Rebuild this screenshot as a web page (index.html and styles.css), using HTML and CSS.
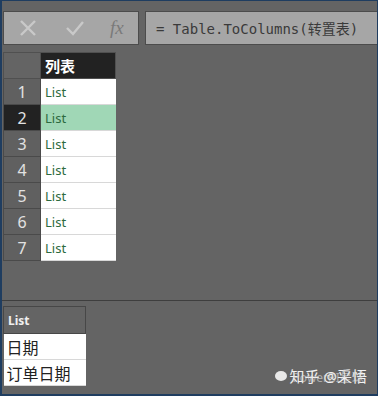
FILE: index.html
```html
<!DOCTYPE html>
<html>
<head>
    <meta charset="utf-8" />
    <title>ToColumns</title>
    <link rel="stylesheet" href="styles.css">
</head>
<body>
    <div class="pq-main">
        <div class="pq-formula">
            <div class="pq-formula-buttons">
                <svg class="pq-icon" width="20" height="20" viewBox="0 0 20 20">
                    <path d="M3 3 L17 17 M17 3 L3 17" stroke="#c9c9c9" stroke-width="2.4" fill="none" />
                </svg>
                <svg class="pq-icon" width="22" height="20" viewBox="0 0 22 20">
                    <path d="M3 10 L9 16 L19 4" stroke="#c9c9c9" stroke-width="2.4" fill="none" />
                </svg>
                <span class="pq-fx">fx</span>
            </div>
            <div class="pq-formula-text">= Table.ToColumns(转置表)</div>
        </div>

        <table class="pq-grid">
            <tr>
                <th class="pq-corner"></th>
                <th class="pq-col-head">列表</th>
            </tr>
            <tr><td class="pq-num">1</td><td class="pq-cell">List</td></tr>
            <tr class="pq-selected"><td class="pq-num">2</td><td class="pq-cell">List</td></tr>
            <tr><td class="pq-num">3</td><td class="pq-cell">List</td></tr>
            <tr><td class="pq-num">4</td><td class="pq-cell">List</td></tr>
            <tr><td class="pq-num">5</td><td class="pq-cell">List</td></tr>
            <tr><td class="pq-num">6</td><td class="pq-cell">List</td></tr>
            <tr><td class="pq-num">7</td><td class="pq-cell">List</td></tr>
        </table>

        <div class="pq-preview">
            <table class="pq-list">
                <tr><th class="pq-list-head">List</th></tr>
                <tr><td class="pq-list-cell">日期</td></tr>
                <tr><td class="pq-list-cell">订单日期</td></tr>
            </table>
        </div>

        <div class="watermark">
            <span class="watermark-dot"></span>
            <span class="watermark-text">知乎 @采悟</span>
            <span class="watermark-sub">PowerBI星球</span>
        </div>
    </div>
</body>
</html>
```

FILE: styles.css
```css
body {
    margin: 0;
    padding: 0;
    background-color: #646464;
    font-family: "Noto Sans", "Noto Sans CJK SC", sans-serif;
}

.pq-main {
    position: relative;
    width: 378px;
    height: 396px;
    box-sizing: border-box;
    border: 1px solid #1f3d60;
    border-left-width: 2px;
    border-bottom-width: 2px;
    overflow: hidden;
    display: flex;
    flex-direction: column;
}

.pq-formula {
    display: flex;
    gap: 6px;
    margin-top: 10px;
    margin-left: 1px;
    height: 34px;
}

.pq-formula-buttons {
    width: 136px;
    flex-shrink: 0;
    box-sizing: border-box;
    background: #a6a6a6;
    border: 1px solid #4c4c4c;
    display: flex;
    align-items: center;
    padding-left: 14px;
    gap: 26px;
}

.pq-icon {
    display: block;
}

.pq-fx {
    font-family: "Liberation Serif", "DejaVu Serif", serif;
    font-style: italic;
    font-size: 19px;
    color: #7a7a7a;
    margin-left: -2px;
}

.pq-formula-text {
    flex: 1;
    box-sizing: border-box;
    background: #a6a6a6;
    border: 1px solid #4c4c4c;
    border-right: none;
    margin-right: -4px;
    display: flex;
    align-items: center;
    padding-left: 10px;
    font-family: "DejaVu Sans Mono", "Noto Sans CJK SC", monospace;
    font-size: 14px;
    color: #3a3a3a;
    white-space: nowrap;
}

.pq-grid {
    border-collapse: collapse;
    table-layout: fixed;
    width: 112px;
    margin-top: 7px;
    margin-left: 1px;
}

.pq-grid td,
.pq-grid th {
    padding: 0;
    height: 26px;
    box-sizing: border-box;
}

.pq-corner {
    width: 37px;
    height: 27px;
    background: #646464;
    border: 1px solid #505050;
}

.pq-col-head {
    width: 75px;
    background: #222222;
    color: #ffffff;
    font-weight: bold;
    font-size: 15px;
    text-align: left;
    padding-left: 4px !important;
    border: 1px solid #505050;
}

.pq-num {
    background: #606060;
    border: 1px solid #4a4a4a;
    color: #e2e2e2;
    font-size: 16px;
    text-align: center;
}

.pq-cell {
    background: #ffffff;
    border-bottom: 1px solid #d8d8d8;
    color: #2d6a40;
    font-size: 13px;
    padding-left: 4px !important;
}

.pq-selected .pq-num {
    background: #222222;
}

.pq-selected .pq-cell {
    background: #a0d7b6;
}

.pq-preview {
    margin-top: auto;
    margin-bottom: 8px;
    border-top: 1px solid #3e3e3e;
    margin-left: -2px;
    padding-left: 3px;
    padding-top: 5px;
}

.pq-list {
    border-collapse: collapse;
}

.pq-list-head {
    width: 82px;
    height: 27px;
    box-sizing: border-box;
    background: #646464;
    border: 1px solid #474747;
    color: #f0f0f0;
    font-size: 12px;
    font-weight: bold;
    text-align: left;
    padding: 0 0 0 4px;
}

.pq-list-cell {
    height: 26px;
    box-sizing: border-box;
    background: #ffffff;
    border-bottom: 1px solid #d8d8d8;
    color: #222222;
    font-size: 16px;
    padding: 0 0 0 3px;
}

.watermark {
    position: absolute;
    right: 10px;
    bottom: 8px;
    display: flex;
    align-items: center;
    color: #f2f2f2;
    font-size: 15px;
}

.watermark-dot {
    width: 12px;
    height: 10px;
    border-radius: 50%;
    background: #e8e8e8;
    margin-right: 3px;
}

.watermark-sub {
    position: absolute;
    left: 18px;
    top: 3px;
    font-size: 12px;
    color: #e0e0e0;
    opacity: 0.6;
}
```
